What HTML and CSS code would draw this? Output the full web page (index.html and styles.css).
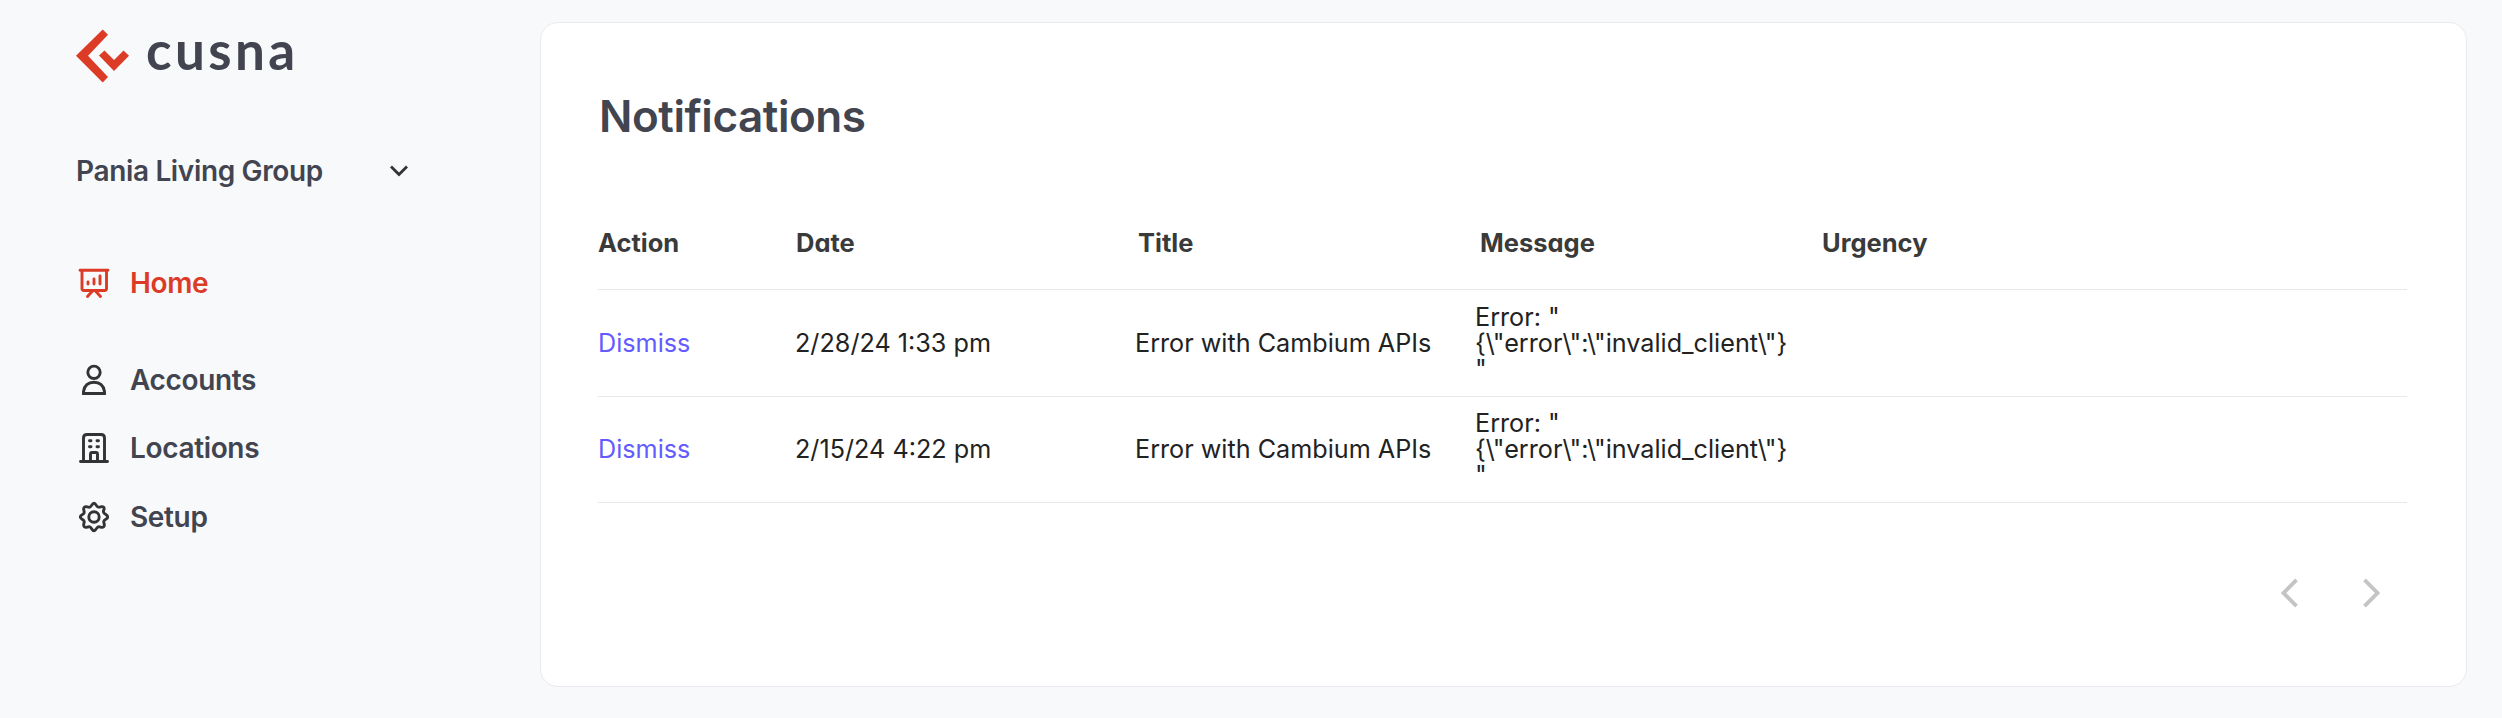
FILE: index.html
```html
<!DOCTYPE html>
<html lang="en">
<head>
<meta charset="utf-8">
<title>Notifications</title>
<link rel="stylesheet" href="styles.css">
</head>
<body>
<div class="app">
  <aside class="sidebar">
    <div class="logo">
      <svg class="logo-mark" width="54" height="54" viewBox="0 0 54 54"><path fill="#dc3b26" d="M26.7 .5 32 5.800 12 26.700 32 48 26.700 53.500 0 26.700ZM23 26.500 28.500 21.500 38 31 47.500 21.500 53 26.700 38 42Z"/></svg>
      <span class="logo-text">cusna</span>
    </div>
    <div class="group">
      <span class="label group-name">Pania Living Group</span>
      <svg class="caret" width="20" height="14" viewBox="0 0 20 14"><path d="M2 2.500 10 10.500 18 2.500"/></svg>
    </div>
    <nav class="nav">
      <a class="item home">
        <svg class="icon" width="32" height="32" viewBox="0 0 32 32"><path d="M2 3.200H30M4 3.500V21.500Q4 23.500 6 23.500H26.500Q28.500 23.500 28.500 21.500V3.500M14.500 24 9.500 29.500M17.500 24 22.500 29.500M10 15V17M16 12V17M22 9V17"/></svg>
        <span class="label">Home</span>
      </a>
      <a class="item">
        <svg class="icon" width="32" height="32" viewBox="0 0 32 32"><circle cx="16" cy="8.300" r="6.200"/><path stroke-linejoin="miter" d="M5.500 29.500V27.500C6.500 21 10.500 18.200 16 18.200S25.500 21 26.500 27.500V29.500Z"/></svg>
        <span class="label">Accounts</span>
      </a>
      <a class="item">
        <svg class="icon" width="32" height="32" viewBox="0 0 32 32"><path d="M2.500 29.500H29.500M5.500 29V6Q5.500 2.500 9 2.500H23Q26.500 2.500 26.500 6V29M12.500 29V22Q12.500 20.500 14 20.500H18Q19.500 20.500 19.500 22V29M11.500 8.800H13M19 8.800H20.500M11.500 14.800H13M19 14.800H20.500"/></svg>
        <span class="label">Locations</span>
      </a>
      <a class="item">
        <svg class="icon" width="32" height="32" viewBox="0 0 32 32"><circle cx="16" cy="16" r="5.200"/><path d="M16 2.300C18.200 2.300 18 5.600 20.200 6.100S24 4.500 25.700 6.300 24.200 9.700 25.900 11.800 29.700 13.600 29.700 16 26.500 18 25.900 20.200 27.500 23.900 25.700 25.700 22.300 25.300 20.200 25.900 18.200 29.700 16 29.700 14 26.500 11.800 25.900 8.100 27.500 6.300 25.700 6.700 22.300 6.100 20.200 2.300 18.200 2.300 16 5.500 14 6.100 11.800 4.500 8.100 6.300 6.300 9.700 6.700 11.800 6.100 13.800 2.300 16 2.300Z"/></svg>
        <span class="label">Setup</span>
      </a>
    </nav>
  </aside>
  <main class="card">
    <h1 class="title">Notifications</h1>
    <div class="table">
      <div class="row head"><span>Action</span><span>Date</span><span>Title</span><span>Message</span><span>Urgency</span></div>
      <div class="row"><a class="dismiss">Dismiss</a><span class="date">2/28/24 1:33 pm</span><span>Error with Cambium APIs</span><span>Error: "<br>{\"error\":\"invalid_client\"}<br>"</span><span></span></div>
      <div class="row"><a class="dismiss">Dismiss</a><span class="date">2/15/24 4:22 pm</span><span>Error with Cambium APIs</span><span>Error: "<br>{\"error\":\"invalid_client\"}<br>"</span><span></span></div>
    </div>
    <div class="pager">
      <svg width="18" height="30" viewBox="0 0 18 30"><path d="M15.500 1.800 2.500 15 15.500 28.200"/></svg>
      <svg width="18" height="30" viewBox="0 0 18 30"><path d="M2.500 1.800 15.500 15 2.500 28.200"/></svg>
    </div>
  </main>
</div>
</body>
</html>
```
FILE: styles.css
```css
* { box-sizing: border-box; }
body { margin: 0; background: #f8f9fb; font-family: Inter, sans-serif; }
.app { display: flex; width: 2502px; height: 718px; padding: 22px 35px 30px 76px; }
.sidebar { width: 464px; }
.logo { display: flex; height: 68px; padding-top: 7px; }
.logo-mark { flex: none; }
.logo-text { margin: -11px 0 0 16px; font: 700 53px/64px Lato, sans-serif; letter-spacing: 3.4px; color: #424550; }
.group { display: flex; align-items: center; justify-content: space-between; width: 333px; height: 68px; margin-top: 47px; }
.label { font-size: 28px; font-weight: 600; line-height: 34px; letter-spacing: -0.35px; color: #424550; }
.caret { fill: none; stroke: #333; stroke-width: 2.800; }
.nav { display: flex; flex-direction: column; margin-top: 44px; }
.item { display: flex; align-items: center; height: 68.500px; gap: 20px; padding-left: 2px; }
.home { margin-bottom: 28px; }
.home .label { color: #dc3b26; }
.icon { flex: none; fill: none; stroke: #333; stroke-width: 2.900; stroke-linecap: round; stroke-linejoin: round; }
.home .icon { stroke: #dc3b26; }
.card { flex: 1; height: 665px; padding: 0 59px 0 57px; background: #fff; border: 1px solid #e9e9f0; border-radius: 18px; }
.title { margin: 66px 0 0 1px; font-size: 44px; font-weight: 600; line-height: 54px; letter-spacing: -0.45px; color: #424550; }
.table { margin-top: 55px; }
.row { display: grid; grid-template-columns: 197px 340px 340px 342px 1fr; align-items: center; height: 106.500px; border-bottom: 1px solid #e8e8ea; font-size: 25.200px; line-height: 26px; color: #222; }
.head { grid-template-columns: 198px 342px 342px 342px 1fr; height: 92px; padding-bottom: 1px; font-size: 25.500px; font-weight: 650; color: #3a3a3a; font-feature-settings: "cv11"; }
.dismiss { color: #635bff; }
.pager { display: flex; justify-content: flex-end; gap: 63px; margin-top: 75px; padding-right: 27px; }
.pager svg { fill: none; stroke: #c4c4c4; stroke-width: 3.800; }
```
